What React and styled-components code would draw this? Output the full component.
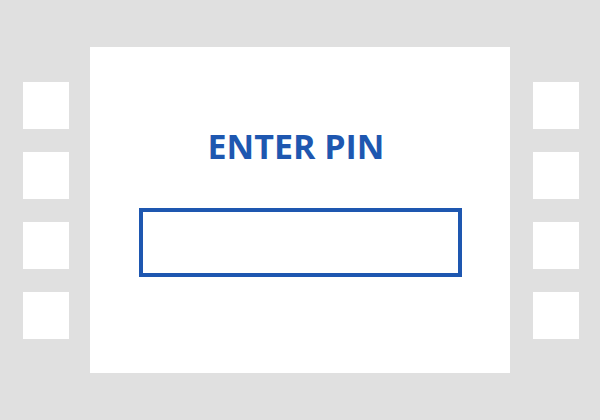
import React from "react";
import styled, { createGlobalStyle } from "styled-components";

const GlobalStyle = createGlobalStyle`
  html, body {
    margin: 0;
    padding: 0;
    background: #e0e0e0;
  }
`;

const Screen = styled.div`
  width: 600px;
  height: 420px;
  display: flex;
  align-items: center;
  background: #e0e0e0;
  box-sizing: border-box;
  padding: 0 ${(p) => p.$right}px 0 23px;
`;

const KeyColumn = styled.div`
  display: flex;
  flex-direction: column;
  gap: 23px;
  margin: ${(p) => p.$margin};
`;

const SideKey = styled.button`
  width: 46px;
  height: 47px;
  border: none;
  padding: 0;
  background: #ffffff;
  cursor: pointer;
`;

const Display = styled.div`
  width: 420px;
  height: 326px;
  background: #ffffff;
  display: flex;
  flex-direction: column;
  align-items: center;
  box-sizing: border-box;
  padding-top: 76px;
`;

const Title = styled.h1`
  margin: 0;
  font-family: "Open Sans", "Liberation Sans", sans-serif;
  font-weight: 700;
  font-size: 34px;
  line-height: 46px;
  color: #1e57b0;
  margin-right: 8px;
`;

const PinInput = styled.input`
  margin-top: 39px;
  width: 323px;
  height: 69px;
  box-sizing: border-box;
  border: 4px solid #1e57b0;
  background: #ffffff;
  outline: none;
  font-family: "Open Sans", sans-serif;
  font-size: 28px;
  text-align: center;
  color: #1e57b0;
`;

const keys = [0, 1, 2, 3];

export default function App() {
  return (
    <>
      <GlobalStyle />
      <Screen $right={21}>
        <KeyColumn $margin="0 21px 0 0">
          {keys.map((k) => (
            <SideKey key={k} aria-label={`left key ${k + 1}`} />
          ))}
        </KeyColumn>
        <Display>
          <Title>ENTER PIN</Title>
          <PinInput type="password" />
        </Display>
        <KeyColumn $margin="0 0 0 23px">
          {keys.map((k) => (
            <SideKey key={k} aria-label={`right key ${k + 1}`} />
          ))}
        </KeyColumn>
      </Screen>
    </>
  );
}
